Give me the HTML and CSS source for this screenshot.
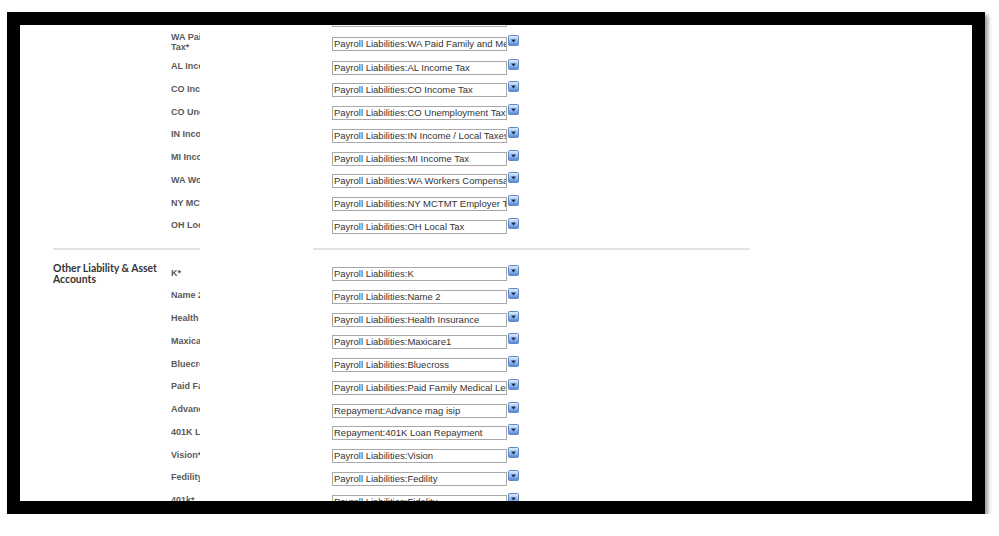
FILE: index.html
```html
<!DOCTYPE html>
<html lang="en">
<head>
    <meta charset="UTF-8">
    <title>Payroll Account Mapping</title>
    <link rel="stylesheet" href="styles.css">
</head>
<body>
    <div class="frame">
        <div class="viewport">
            <div class="page">

                <!-- Tax liability accounts (scrolled part) -->
                <div class="group">
                    <div class="group-title"></div>
                    <div class="rows">
                        <div class="row">
                            <div class="label"><span>WA Paid Family and Medical Leave Employer Tax*</span></div>
                            <div class="control"><div class="select">Payroll Liabilities:WA Paid Family and Medical Leave Employer</div><span class="drop"><svg width="11" height="11" viewBox="0 0 11 11"><use href="#dropIcon"/></svg></span></div>
                        </div>
                        <div class="row row-tall">
                            <div class="label"><span>WA Paid Family and Medical Leave<br>Tax*</span></div>
                            <div class="control"><div class="select">Payroll Liabilities:WA Paid Family and Medical Leave</div><span class="drop"><svg width="11" height="11" viewBox="0 0 11 11"><use href="#dropIcon"/></svg></span></div>
                        </div>
                        <div class="row">
                            <div class="label"><span>AL Income Tax*</span></div>
                            <div class="control"><div class="select">Payroll Liabilities:AL Income Tax</div><span class="drop"><svg width="11" height="11" viewBox="0 0 11 11"><use href="#dropIcon"/></svg></span></div>
                        </div>
                        <div class="row">
                            <div class="label"><span>CO Income Tax*</span></div>
                            <div class="control"><div class="select">Payroll Liabilities:CO Income Tax</div><span class="drop"><svg width="11" height="11" viewBox="0 0 11 11"><use href="#dropIcon"/></svg></span></div>
                        </div>
                        <div class="row">
                            <div class="label"><span>CO Unemployment Tax*</span></div>
                            <div class="control"><div class="select">Payroll Liabilities:CO Unemployment Tax</div><span class="drop"><svg width="11" height="11" viewBox="0 0 11 11"><use href="#dropIcon"/></svg></span></div>
                        </div>
                        <div class="row">
                            <div class="label"><span>IN Income / Local Taxes*</span></div>
                            <div class="control"><div class="select">Payroll Liabilities:IN Income / Local Taxes</div><span class="drop"><svg width="11" height="11" viewBox="0 0 11 11"><use href="#dropIcon"/></svg></span></div>
                        </div>
                        <div class="row">
                            <div class="label"><span>MI Income Tax*</span></div>
                            <div class="control"><div class="select">Payroll Liabilities:MI Income Tax</div><span class="drop"><svg width="11" height="11" viewBox="0 0 11 11"><use href="#dropIcon"/></svg></span></div>
                        </div>
                        <div class="row">
                            <div class="label"><span>WA Workers Compensation*</span></div>
                            <div class="control"><div class="select">Payroll Liabilities:WA Workers Compensation</div><span class="drop"><svg width="11" height="11" viewBox="0 0 11 11"><use href="#dropIcon"/></svg></span></div>
                        </div>
                        <div class="row">
                            <div class="label"><span>NY MCTMT Employer Tax*</span></div>
                            <div class="control"><div class="select">Payroll Liabilities:NY MCTMT Employer Tax</div><span class="drop"><svg width="11" height="11" viewBox="0 0 11 11"><use href="#dropIcon"/></svg></span></div>
                        </div>
                        <div class="row">
                            <div class="label"><span>OH Local Tax*</span></div>
                            <div class="control"><div class="select">Payroll Liabilities:OH Local Tax</div><span class="drop"><svg width="11" height="11" viewBox="0 0 11 11"><use href="#dropIcon"/></svg></span></div>
                        </div>
                    </div>
                </div>

                <div class="divider">
                    <div class="divider-left"></div>
                    <div class="divider-right"></div>
                </div>

                <!-- Other liability & asset accounts -->
                <div class="group group-other">
                    <div class="group-title">Other Liability &amp; Asset Accounts</div>
                    <div class="rows">
                        <div class="row">
                            <div class="label"><span>K*</span></div>
                            <div class="control"><div class="select">Payroll Liabilities:K</div><span class="drop"><svg width="11" height="11" viewBox="0 0 11 11"><use href="#dropIcon"/></svg></span></div>
                        </div>
                        <div class="row">
                            <div class="label"><span>Name 2*</span></div>
                            <div class="control"><div class="select">Payroll Liabilities:Name 2</div><span class="drop"><svg width="11" height="11" viewBox="0 0 11 11"><use href="#dropIcon"/></svg></span></div>
                        </div>
                        <div class="row">
                            <div class="label"><span>Health Insurance*</span></div>
                            <div class="control"><div class="select">Payroll Liabilities:Health Insurance</div><span class="drop"><svg width="11" height="11" viewBox="0 0 11 11"><use href="#dropIcon"/></svg></span></div>
                        </div>
                        <div class="row">
                            <div class="label"><span>Maxicare1*</span></div>
                            <div class="control"><div class="select">Payroll Liabilities:Maxicare1</div><span class="drop"><svg width="11" height="11" viewBox="0 0 11 11"><use href="#dropIcon"/></svg></span></div>
                        </div>
                        <div class="row">
                            <div class="label"><span>Bluecross*</span></div>
                            <div class="control"><div class="select">Payroll Liabilities:Bluecross</div><span class="drop"><svg width="11" height="11" viewBox="0 0 11 11"><use href="#dropIcon"/></svg></span></div>
                        </div>
                        <div class="row">
                            <div class="label"><span>Paid Family Medical Leave*</span></div>
                            <div class="control"><div class="select">Payroll Liabilities:Paid Family Medical Leave</div><span class="drop"><svg width="11" height="11" viewBox="0 0 11 11"><use href="#dropIcon"/></svg></span></div>
                        </div>
                        <div class="row">
                            <div class="label"><span>Advance mag isip*</span></div>
                            <div class="control"><div class="select">Repayment:Advance mag isip</div><span class="drop"><svg width="11" height="11" viewBox="0 0 11 11"><use href="#dropIcon"/></svg></span></div>
                        </div>
                        <div class="row">
                            <div class="label"><span>401K Loan Repayment*</span></div>
                            <div class="control"><div class="select">Repayment:401K Loan Repayment</div><span class="drop"><svg width="11" height="11" viewBox="0 0 11 11"><use href="#dropIcon"/></svg></span></div>
                        </div>
                        <div class="row">
                            <div class="label"><span>Vision*</span></div>
                            <div class="control"><div class="select">Payroll Liabilities:Vision</div><span class="drop"><svg width="11" height="11" viewBox="0 0 11 11"><use href="#dropIcon"/></svg></span></div>
                        </div>
                        <div class="row">
                            <div class="label"><span>Fedility*</span></div>
                            <div class="control"><div class="select">Payroll Liabilities:Fedility</div><span class="drop"><svg width="11" height="11" viewBox="0 0 11 11"><use href="#dropIcon"/></svg></span></div>
                        </div>
                        <div class="row">
                            <div class="label"><span>401k*</span></div>
                            <div class="control"><div class="select">Payroll Liabilities:Fidelity</div><span class="drop"><svg width="11" height="11" viewBox="0 0 11 11"><use href="#dropIcon"/></svg></span></div>
                        </div>
                    </div>
                </div>

            </div>
        </div>
    </div>

    <!-- shared dropdown arrow button -->
    <svg width="0" height="0" class="defs">
        <defs>
            <linearGradient id="dropFill" x1="0" y1="0" x2="0" y2="1">
                <stop offset="0" stop-color="#e4eefc"/>
                <stop offset="0.5" stop-color="#9fc0ef"/>
                <stop offset="1" stop-color="#4f84d4"/>
            </linearGradient>
            <g id="dropIcon">
                <rect x="0.5" y="0.5" width="10" height="10" rx="1" fill="url(#dropFill)" stroke="#5f88c4"/>
                <path d="M3 4.5 L8 4.5 L5.5 7.5 Z" fill="#132b55"/>
            </g>
        </defs>
    </svg>
</body>
</html>
```

FILE: styles.css
```css
body {
    margin: 0;
    background: #ffffff;
    font-family: "Liberation Sans", Arial, sans-serif;
}

.defs {
    position: absolute;
}

.frame {
    margin: 12px 0 0 7px;
    width: 978px;
    height: 502px;
    box-sizing: border-box;
    border: 13px solid #000;
    box-shadow: 3px 3px 4px rgba(0,0,0,0.4);
}

.viewport {
    width: 100%;
    height: 100%;
    overflow: hidden;
    background: #fff;
}

.page {
    margin-top: -16.5px;
    padding-left: 33px;
}

.group {
    display: flex;
}

.group-other {
    margin-top: 12.5px;
}

.group-title {
    width: 118px;
    flex-shrink: 0;
    font-family: Lato, "Open Sans", sans-serif;
    font-weight: 700;
    font-size: 10.4px;
    line-height: 11px;
    color: #333;
    padding-right: 4px;
    box-sizing: border-box;
}

.rows {
    display: flex;
    flex-direction: column;
}

.row {
    height: 22.75px;
    display: flex;
    align-items: center;
}

.row-tall {
    height: 25px;
}

.label {
    width: 29px;
    overflow: hidden;
    padding-bottom: 3px;
    font-size: 9px;
    line-height: 10px;
    font-weight: bold;
    color: #5a5a5a;
    white-space: nowrap;
}

.control {
    margin-left: 132px;
    display: flex;
    align-items: flex-start;
}

.select {
    width: 175px;
    height: 14px;
    box-sizing: border-box;
    border: 1px solid #a8a8a8;
    padding: 0 2px 0 1px;
    font-size: 9.5px;
    line-height: 12px;
    color: #333;
    white-space: nowrap;
    overflow: hidden;
}

.drop {
    margin-left: 1px;
    margin-top: -2px;
    width: 11px;
    height: 11px;
    display: block;
}

.drop svg {
    display: block;
}

.divider {
    display: flex;
    margin-top: 10px;
}

.divider-left {
    width: 147px;
    height: 2px;
    background: #e3e3e3;
}

.divider-right {
    width: 437px;
    height: 2px;
    margin-left: 113px;
    background: #e3e3e3;
}
```
